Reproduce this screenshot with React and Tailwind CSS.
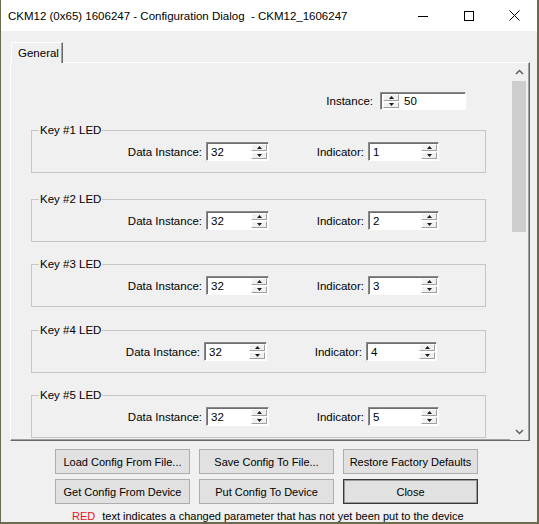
import React from "react";

function TinyArrow({ up }) {
  return (
    <svg width="5" height="3" viewBox="0 0 5 3" className="block">
      {up ? <path d="M2.5 0L5 3H0Z" fill="#1a1a1a" /> : <path d="M0 0H5L2.5 3Z" fill="#1a1a1a" />}
    </svg>
  );
}

function SpinButtons() {
  return (
    <div className="flex h-full w-[16px] flex-col gap-[1px]">
      <div className="flex flex-1 items-center justify-center border border-t-white border-l-white border-r-[#a0a0a0] border-b-[#a0a0a0] bg-[#f0f0f0]">
        <TinyArrow up />
      </div>
      <div className="flex flex-1 items-center justify-center border border-t-white border-l-white border-r-[#a0a0a0] border-b-[#a0a0a0] bg-[#f0f0f0]">
        <TinyArrow />
      </div>
    </div>
  );
}

function SpinInput({ value, w }) {
  return (
    <div
      className={`flex h-[19px] ${w} items-stretch border border-t-[#8a8a8a] border-l-[#8a8a8a] border-r-white border-b-white bg-white py-[1px] pr-[1px] shadow-[inset_1px_1px_0_#6e6e6e]`}
    >
      <div className="flex flex-1 items-center pl-[4px] leading-[14px]">{value}</div>
      <SpinButtons />
    </div>
  );
}

function Group({ n, ind, shift, mt }) {
  return (
    <div className={`relative ml-[20px] h-[43px] w-[455px] shrink-0 border border-[#c6c6c6] pt-[11px] ${mt}`}>
      <span className="absolute -top-[8px] left-[7px] bg-[#f0f0f0] px-[1px] leading-[14px]">
        Key #{n} LED
      </span>
      <div className="flex items-center">
        <div className={`${shift ? "w-[168px]" : "w-[170px]"} text-right leading-[14px]`}>Data Instance:</div>
        <div className="ml-[4px]">
          <SpinInput value="32" w="w-[63px]" />
        </div>
        <div className="w-[95px] text-right leading-[14px]">Indicator:</div>
        <div className="ml-[4px]">
          <SpinInput value={ind} w="w-[71px]" />
        </div>
      </div>
    </div>
  );
}

function Chevron({ up }) {
  return (
    <svg width="9" height="6" viewBox="0 0 9 6" className="block">
      <path
        d={up ? "M1 5L4.5 1.5L8 5" : "M1 1L4.5 4.5L8 1"}
        fill="none"
        stroke="#606060"
        strokeWidth="1.5"
      />
    </svg>
  );
}

function Btn({ children, def }) {
  return (
    <div
      className={`flex h-[25px] w-[135px] items-center justify-center bg-[#e1e1e1] text-[11px] leading-[14px] ${
        def ? "border border-[#3a3a3a] shadow-[inset_0_0_0_1px_#9a9a9a]" : "border border-[#adadad]"
      }`}
    >
      {children}
    </div>
  );
}

export default function App() {
  return (
    <div className="flex h-[524px] w-[539px] flex-col overflow-hidden border-b-2 border-l border-r-2 border-[#6d6b4f] bg-[#f0f0f0] font-['Liberation_Sans',Arial,sans-serif] text-[11.5px] text-black">
      {/* Title bar */}
      <div className="flex h-[31px] shrink-0 items-center bg-white">
        <div className="flex-1 pl-[7px] text-[11.5px] leading-[16px]">
          CKM12 (0x65) 1606247 - Configuration Dialog&nbsp; - CKM12_1606247
        </div>
        <div className="flex h-full">
          <div className="flex h-full w-[46px] items-center justify-center">
            <svg width="10" height="10" viewBox="0 0 10 10">
              <path d="M0 5.5H10" stroke="#000" strokeWidth="1" />
            </svg>
          </div>
          <div className="flex h-full w-[46px] items-center justify-center">
            <svg width="10" height="10" viewBox="0 0 10 10">
              <rect x="0.5" y="0.5" width="9" height="9" fill="none" stroke="#000" strokeWidth="1" />
            </svg>
          </div>
          <div className="flex h-full w-[45px] items-center justify-center">
            <svg width="11" height="11" viewBox="0 0 11 11">
              <path d="M0.5 0.5L10.5 10.5M10.5 0.5L0.5 10.5" stroke="#000" strokeWidth="1" />
            </svg>
          </div>
        </div>
      </div>

      {/* Body */}
      <div className="flex flex-1 flex-col pl-[9px] pt-[11px]">
        {/* Tab */}
        <div className="relative z-10 -mb-[1px] ml-[1px] flex h-[21px] w-[52px] items-center border-l border-r border-t border-l-white border-t-white border-r-[#696969] bg-[#f0f0f0] pl-[6px] leading-[14px] shadow-[inset_-1px_0_0_#a0a0a0]">
          General
        </div>
        {/* Panel */}
        <div className="flex h-[379px] w-[520px] border border-b-[#696969] border-l-white border-r-[#696969] border-t-white pr-[1px] shadow-[inset_-1px_-1px_0_#a0a0a0]">
          <div className="flex h-full w-[499px] flex-col overflow-hidden">
            <div className="mt-[29px] flex items-center">
              <div className="w-[362px] text-right leading-[14px]">Instance:</div>
              <div className="ml-[7px] flex h-[18px] w-[86px] items-stretch border border-t-[#8a8a8a] border-l-[#8a8a8a] border-r-white border-b-white bg-white py-[1px] pl-[2px] shadow-[inset_1px_1px_0_#6e6e6e]">
                <SpinButtons />
                <div className="flex flex-1 items-center pl-[5px] leading-[14px]">50</div>
              </div>
            </div>
            <Group n={1} ind="1" mt="mt-[20px]" />
            <Group n={2} ind="2" mt="mt-[26px]" />
            <Group n={3} ind="3" mt="mt-[22px]" />
            <Group n={4} ind="4" shift mt="mt-[23px]" />
            <Group n={5} ind="5" mt="mt-[22px]" />
          </div>
          {/* Scrollbar */}
          <div className="flex h-full w-[18px] flex-col bg-[#f0f0f0]">
            <div className="flex h-[17px] items-center justify-center">
              <Chevron up />
            </div>
            <div className="mx-[2px] mt-[1px] h-[151px] bg-[#cdcdcd]" />
            <div className="flex-1" />
            <div className="flex h-[17px] items-center justify-center">
              <Chevron />
            </div>
          </div>
        </div>

        {/* Buttons */}
        <div className="ml-[45px] mt-[8px] grid w-[423px] grid-cols-3 gap-x-[9px] gap-y-[5px]">
          <Btn>Load Config From File...</Btn>
          <Btn>Save Config To File...</Btn>
          <Btn>Restore Factory Defaults</Btn>
          <Btn>Get Config From Device</Btn>
          <Btn>Put Config To Device</Btn>
          <Btn def>Close</Btn>
        </div>

        <div className="ml-[62px] mt-[5px] flex text-[11px] leading-[14px]">
          <span className="text-[#e8141e]">RED</span>
          <span className="ml-[7px]">text indicates a changed parameter that has not yet been put to the device</span>
        </div>
      </div>
    </div>
  );
}
